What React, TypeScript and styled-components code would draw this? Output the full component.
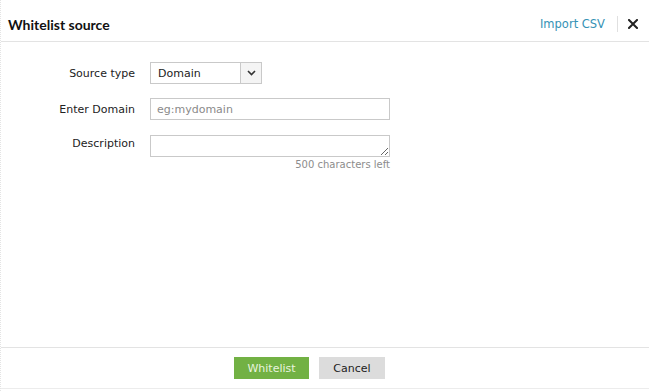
import React, { FC } from 'react';
import styled, { createGlobalStyle } from 'styled-components';

const GlobalStyle = createGlobalStyle`
  html, body {
    margin: 0;
    padding: 0;
    background: #fff;
  }
  body {
    font-family: "DejaVu Sans", Verdana, sans-serif;
    font-size: 11px;
    color: #222;
  }
`;

const Dialog = styled.div`
  width: 649px;
  height: 391px;
  display: flex;
  flex-direction: column;
  box-sizing: border-box;
  border-left: 1px dotted #e4e4e4;
  background: #fff;
`;

const Header = styled.div`
  height: 42px;
  box-sizing: border-box;
  display: flex;
  align-items: center;
  justify-content: space-between;
  padding: 7px 9px 0 7px;
  border-bottom: 1px solid #e3e3e3;
`;

const Title = styled.h1`
  margin: 0;
  font-family: Lato, "Open Sans", sans-serif;
  font-size: 14px;
  font-weight: 700;
  color: #111;
`;

const HeaderActions = styled.div`
  display: flex;
  align-items: center;
`;

const LinkButton = styled.a`
  color: #3592b5;
  font-size: 11.5px;
  text-decoration: none;
  cursor: pointer;
`;

const Divider = styled.span`
  width: 1px;
  height: 16px;
  background: #e0e0e0;
  margin: 0 8px 0 12px;
`;

const CloseButton = styled.button`
  border: 0;
  background: none;
  padding: 0;
  width: 14px;
  height: 14px;
  display: flex;
  align-items: center;
  justify-content: center;
  cursor: pointer;
`;

const Body = styled.div`
  flex: 1;
  padding-top: 20px;
  display: flex;
  flex-direction: column;
  gap: 14px;
`;

const Row = styled.div<{ $top?: boolean }>`
  display: grid;
  grid-template-columns: 134px 240px;
  column-gap: 15px;
  align-items: ${p => (p.$top ? 'start' : 'center')};
`;

const Label = styled.label<{ $pad?: number }>`
  text-align: right;
  color: #222;
  padding-top: ${p => p.$pad ?? 0}px;
`;

const Select = styled.div`
  display: flex;
  width: 112px;
  height: 22px;
  box-sizing: border-box;
  border: 1px solid #c9c9c9;
`;

const SelectValue = styled.div`
  flex: 1;
  display: flex;
  align-items: center;
  padding-left: 7px;
  color: #222;
`;

const SelectArrow = styled.div`
  width: 20px;
  border-left: 1px solid #c9c9c9;
  background: #f4f4f4;
  display: flex;
  align-items: center;
  justify-content: center;
`;

const Input = styled.input`
  width: 240px;
  height: 22px;
  box-sizing: border-box;
  border: 1px solid #c9c9c9;
  padding: 0 6px;
  font-family: "DejaVu Sans", Verdana, sans-serif;
  font-size: 11px;
  color: #222;
  outline: none;
  &::placeholder {
    color: #8a8a8a;
  }
`;

const TextAreaBox = styled.div`
  display: flex;
  flex-direction: column;
  align-items: flex-end;
  padding-top: 1px;
`;

const TextArea = styled.textarea`
  width: 240px;
  height: 22px;
  box-sizing: border-box;
  border: 1px solid #c9c9c9;
  padding: 3px 6px;
  font-family: "DejaVu Sans", Verdana, sans-serif;
  font-size: 11px;
  resize: both;
  outline: none;
  display: block;
`;

const Counter = styled.div`
  margin-top: 2px;
  font-size: 10px;
  color: #8c8c8c;
`;

const Footer = styled.div`
  height: 40px;
  margin-bottom: 2px;
  border-top: 1px solid #e3e3e3;
  border-bottom: 1px solid #ececec;
  display: flex;
  align-items: center;
  justify-content: center;
  gap: 10px;
  padding-right: 31px;
`;

const Button = styled.button<{ $primary?: boolean }>`
  height: 22px;
  min-width: ${p => (p.$primary ? 75 : 66)}px;
  border: 0;
  padding: 0 12px;
  font-family: "DejaVu Sans", Verdana, sans-serif;
  font-size: 11px;
  background: ${p => (p.$primary ? '#72b144' : '#dcdcdc')};
  color: ${p => (p.$primary ? '#e8f4df' : '#222')};
  cursor: pointer;
`;

const App: FC = () => (
  <>
    <GlobalStyle />
    <Dialog>
      <Header>
        <Title>Whitelist source</Title>
        <HeaderActions>
          <LinkButton>Import CSV</LinkButton>
          <Divider />
          <CloseButton aria-label="Close">
            <svg width="10" height="10" viewBox="0 0 10 10">
              <path d="M1 1 L9 9 M9 1 L1 9" stroke="#222" strokeWidth="2" strokeLinecap="square" />
            </svg>
          </CloseButton>
        </HeaderActions>
      </Header>
      <Body>
        <Row>
          <Label>Source type</Label>
          <Select>
            <SelectValue>Domain</SelectValue>
            <SelectArrow>
              <svg width="9" height="6" viewBox="0 0 9 6">
                <path d="M1 1 L4.5 4.5 L8 1" fill="none" stroke="#333" strokeWidth="1.6" />
              </svg>
            </SelectArrow>
          </Select>
        </Row>
        <Row>
          <Label>Enter Domain</Label>
          <Input placeholder="eg:mydomain" />
        </Row>
        <Row $top>
          <Label $pad={3}>Description</Label>
          <TextAreaBox>
            <TextArea />
            <Counter>500 characters left</Counter>
          </TextAreaBox>
        </Row>
      </Body>
      <Footer>
        <Button $primary>Whitelist</Button>
        <Button>Cancel</Button>
      </Footer>
    </Dialog>
  </>
);

export default App;
